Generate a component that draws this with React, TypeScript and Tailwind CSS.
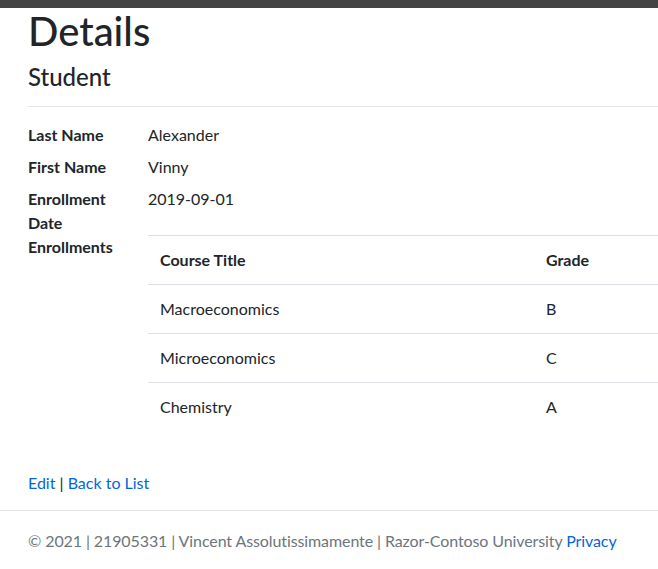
const rows = [
  { title: "Macroeconomics", grade: "B" },
  { title: "Microeconomics", grade: "C" },
  { title: "Chemistry", grade: "A" },
];

export default function App() {
  return (
    <div
      className="min-h-[569px] bg-white text-[#212529] text-[16px] leading-[24px] overflow-hidden"
      style={{ fontFamily: "Lato, 'Liberation Sans', sans-serif" }}
    >
      <div className="h-[8px] bg-[#444444]" />
      <div className="pl-[28px]">
        <h1 className="text-[40px] leading-[48px] font-medium mt-[-1px]">Details</h1>
        <h4 className="text-[24px] leading-[29px] font-medium mt-[7px]">Student</h4>
        <div className="mt-[15px] border-t border-[#e5e5e5]" />
        <dl className="mt-[16px] grid grid-cols-[120px_1fr]">
          <dt className="font-bold">Last Name</dt>
          <dd className="mb-[8px]">Alexander</dd>
          <dt className="font-bold">First Name</dt>
          <dd className="mb-[8px]">Vinny</dd>
          <dt className="font-bold w-[90px]">Enrollment Date</dt>
          <dd className="mb-[8px]">2019-09-01</dd>
          <dt className="font-bold">Enrollments</dt>
          <dd className="mb-[8px]">
            <table className="w-full border-collapse text-left">
              <thead>
                <tr className="border-t border-[#dee2e6]">
                  <th className="p-[12px] font-bold w-[386px]">Course Title</th>
                  <th className="p-[12px] font-bold">Grade</th>
                </tr>
              </thead>
              <tbody>
                {rows.map((r) => (
                  <tr key={r.title} className="border-t border-[#dee2e6]">
                    <td className="p-[12px]">{r.title}</td>
                    <td className="p-[12px]">{r.grade}</td>
                  </tr>
                ))}
              </tbody>
            </table>
          </dd>
        </dl>
        <div className="mt-[32px]">
          <a className="text-[#0366d6]">Edit</a> | <a className="text-[#0366d6]">Back to List</a>
        </div>
      </div>
      <footer className="mt-[15px] border-t border-[#e5e5e5] pl-[28px] pt-[18px] text-[#6c757d] tracking-[-0.1px] whitespace-nowrap">
        © 2021 | 21905331 | Vincent Assolutissimamente | Razor-Contoso University{" "}
        <a className="text-[#0366d6]">Privacy</a>
      </footer>
    </div>
  );
}
